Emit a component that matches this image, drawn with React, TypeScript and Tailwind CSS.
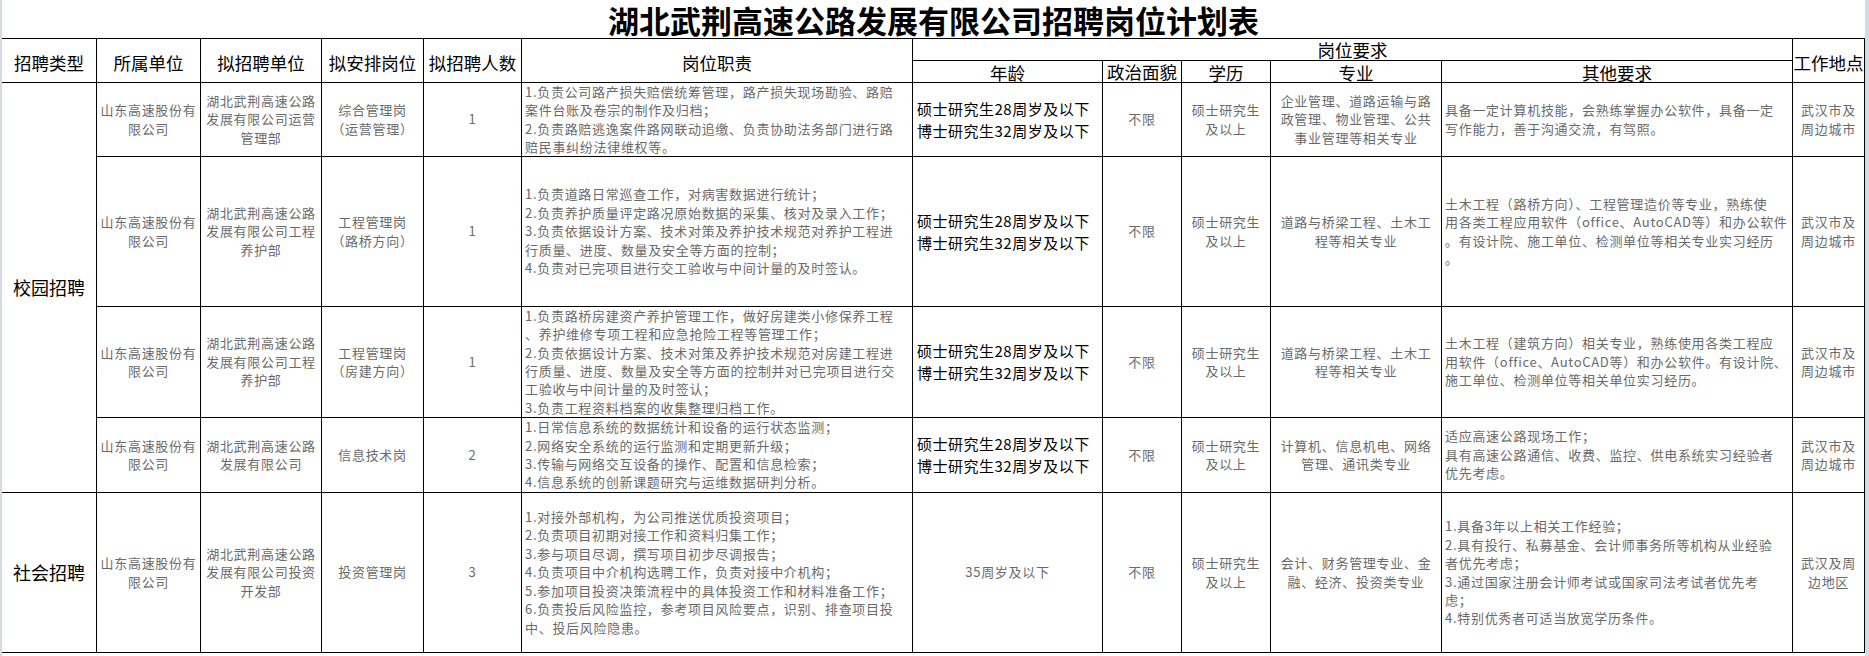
import React from "react";

type Row = {
  unit: string[];
  dept: string[];
  post: string[];
  count: string;
  duties: string[];
  age: string[];
  ageBlack: boolean;
  major: string[];
  other: string[];
  place: string[];
};

const rows: Row[] = [
  {
    unit: ["山东高速股份有", "限公司"],
    dept: ["湖北武荆高速公路", "发展有限公司运营", "管理部"],
    post: ["综合管理岗", "（运营管理）"],
    count: "1",
    duties: [
      "1.负责公司路产损失赔偿统筹管理，路产损失现场勘验、路赔",
      "案件台账及卷宗的制作及归档；",
      "2.负责路赔逃逸案件路网联动追缴、负责协助法务部门进行路",
      "赔民事纠纷法律维权等。",
    ],
    age: ["硕士研究生28周岁及以下", "博士研究生32周岁及以下"],
    ageBlack: true,
    major: ["企业管理、道路运输与路", "政管理、物业管理、公共", "事业管理等相关专业"],
    other: ["具备一定计算机技能，会熟练掌握办公软件，具备一定", "写作能力，善于沟通交流，有驾照。"],
    place: ["武汉市及", "周边城市"],
  },
  {
    unit: ["山东高速股份有", "限公司"],
    dept: ["湖北武荆高速公路", "发展有限公司工程", "养护部"],
    post: ["工程管理岗", "（路桥方向）"],
    count: "1",
    duties: [
      "1.负责道路日常巡查工作，对病害数据进行统计；",
      "2.负责养护质量评定路况原始数据的采集、核对及录入工作；",
      "3.负责依据设计方案、技术对策及养护技术规范对养护工程进",
      "行质量、进度、数量及安全等方面的控制；",
      "4.负责对已完项目进行交工验收与中间计量的及时签认。",
    ],
    age: ["硕士研究生28周岁及以下", "博士研究生32周岁及以下"],
    ageBlack: true,
    major: ["道路与桥梁工程、土木工", "程等相关专业"],
    other: [
      "土木工程（路桥方向）、工程管理造价等专业，熟练使",
      "用各类工程应用软件（office、AutoCAD等）和办公软件",
      "。有设计院、施工单位、检测单位等相关专业实习经历",
      "。",
    ],
    place: ["武汉市及", "周边城市"],
  },
  {
    unit: ["山东高速股份有", "限公司"],
    dept: ["湖北武荆高速公路", "发展有限公司工程", "养护部"],
    post: ["工程管理岗", "（房建方向）"],
    count: "1",
    duties: [
      "1.负责路桥房建资产养护管理工作，做好房建类小修保养工程",
      "、养护维修专项工程和应急抢险工程等管理工作；",
      "2.负责依据设计方案、技术对策及养护技术规范对房建工程进",
      "行质量、进度、数量及安全等方面的控制并对已完项目进行交",
      "工验收与中间计量的及时签认；",
      "3.负责工程资料档案的收集整理归档工作。",
    ],
    age: ["硕士研究生28周岁及以下", "博士研究生32周岁及以下"],
    ageBlack: true,
    major: ["道路与桥梁工程、土木工", "程等相关专业"],
    other: [
      "土木工程（建筑方向）相关专业，熟练使用各类工程应",
      "用软件（office、AutoCAD等）和办公软件。有设计院、",
      "施工单位、检测单位等相关单位实习经历。",
    ],
    place: ["武汉市及", "周边城市"],
  },
  {
    unit: ["山东高速股份有", "限公司"],
    dept: ["湖北武荆高速公路", "发展有限公司"],
    post: ["信息技术岗"],
    count: "2",
    duties: [
      "1.日常信息系统的数据统计和设备的运行状态监测；",
      "2.网络安全系统的运行监测和定期更新升级；",
      "3.传输与网络交互设备的操作、配置和信息检索；",
      "4.信息系统的创新课题研究与运维数据研判分析。",
    ],
    age: ["硕士研究生28周岁及以下", "博士研究生32周岁及以下"],
    ageBlack: true,
    major: ["计算机、信息机电、网络", "管理、通讯类专业"],
    other: ["适应高速公路现场工作；", "具有高速公路通信、收费、监控、供电系统实习经验者", "优先考虑。"],
    place: ["武汉市及", "周边城市"],
  },
  {
    unit: ["山东高速股份有", "限公司"],
    dept: ["湖北武荆高速公路", "发展有限公司投资", "开发部"],
    post: ["投资管理岗"],
    count: "3",
    duties: [
      "1.对接外部机构，为公司推送优质投资项目；",
      "2.负责项目初期对接工作和资料归集工作；",
      "3.参与项目尽调，撰写项目初步尽调报告；",
      "4.负责项目中介机构选聘工作，负责对接中介机构；",
      "5.参加项目投资决策流程中的具体投资工作和材料准备工作；",
      "6.负责投后风险监控，参考项目风险要点，识别、排查项目投",
      "中、投后风险隐患。",
    ],
    age: ["35周岁及以下"],
    ageBlack: false,
    major: ["会计、财务管理专业、金", "融、经济、投资类专业"],
    other: [
      "1.具备3年以上相关工作经验；",
      "2.具有投行、私募基金、会计师事务所等机构从业经验",
      "者优先考虑；",
      "3.通过国家注册会计师考试或国家司法考试者优先考",
      "虑；",
      "4.特别优秀者可适当放宽学历条件。",
    ],
    place: ["武汉及周", "边地区"],
  },
];

const body = "text-[13px] tracking-[0.7px] leading-[18.4px] text-[#6a6a6a]";

function Lines({ items }: { items: string[] }) {
  return (
    <div>
      {items.map((t, i) => (
        <div key={i} className="whitespace-nowrap">
          {t}
        </div>
      ))}
    </div>
  );
}

function Head({ children, className = "" }: { children: React.ReactNode; className?: string }) {
  return (
    <div className={"bg-white flex justify-center text-center text-black text-[17.5px] leading-none " + className}>
      {children}
    </div>
  );
}

function C({ children, left = false, className = "" }: { children: React.ReactNode; left?: boolean; className?: string }) {
  return (
    <div
      className={
        "bg-white flex items-center " +
        (left ? "justify-start text-left pl-[3px] " : "justify-center text-center ") +
        className
      }
    >
      {children}
    </div>
  );
}

export default function App() {
  return (
    <div className="w-[1869px] h-[656px] bg-white flex font-['Noto_Sans_CJK_SC','Noto_Sans',sans-serif]">
      <div className="w-[2px] bg-[#d5dbe5]" />
      <div className="w-[1863px] flex flex-col">
        <div className="h-[38px] flex items-center justify-center text-[31px] font-bold text-black leading-none">
          湖北武荆高速公路发展有限公司招聘岗位计划表
        </div>
        <div className="grid grid-cols-[94px_103px_120px_101px_97px_390px_189px_78px_88px_170px_350px_71px] grid-rows-[21px_21px_73px_149px_110px_74px_159px] gap-px bg-black border-t border-r border-b border-black">
          <Head className="row-span-2 items-center pt-1">招聘类型</Head>
          <Head className="row-span-2 items-center pt-1">所属单位</Head>
          <Head className="row-span-2 items-center pt-1">拟招聘单位</Head>
          <Head className="row-span-2 items-center pt-1">拟安排岗位</Head>
          <Head className="row-span-2 items-center pt-1">拟招聘人数</Head>
          <Head className="row-span-2 items-center pt-1">岗位职责</Head>
          <Head className="col-span-5 items-center">岗位要求</Head>
          <Head className="row-span-2 items-center pt-1">工作地点</Head>
          <Head className="items-end pb-[1px]">年龄</Head>
          <Head className="items-end pb-[2px] text-[16px]">政治面貌</Head>
          <Head className="items-end pb-[1px]">学历</Head>
          <Head className="items-end pb-[1px]">专业</Head>
          <Head className="items-end pb-[1px]">其他要求</Head>

          {rows.map((r, i) => (
            <React.Fragment key={i}>
              {i === 0 && (
                <C className="row-span-4 text-[18px] text-black">校园招聘</C>
              )}
              {i === 4 && <C className="text-[18px] text-black">社会招聘</C>}
              <C className={body}>
                <Lines items={r.unit} />
              </C>
              <C className={body}>
                <Lines items={r.dept} />
              </C>
              <C className={body}>
                <Lines items={r.post} />
              </C>
              <C className={body}>{r.count}</C>
              <C left className={body}>
                <Lines items={r.duties} />
              </C>
              {r.ageBlack ? (
                <C left className="text-[15px] tracking-[0.5px] leading-[22px] text-black pl-[4px]">
                  <Lines items={r.age} />
                </C>
              ) : (
                <C className={body}>
                  <Lines items={r.age} />
                </C>
              )}
              <C className={body}>不限</C>
              <C className={body}>
                <Lines items={["硕士研究生", "及以上"]} />
              </C>
              <C className={body}>
                <Lines items={r.major} />
              </C>
              <C left className={body}>
                <Lines items={r.other} />
              </C>
              <C className={body}>
                <Lines items={r.place} />
              </C>
            </React.Fragment>
          ))}
        </div>
      </div>
      <div className="w-[4px] bg-[#d5dbe5]" />
    </div>
  );
}
